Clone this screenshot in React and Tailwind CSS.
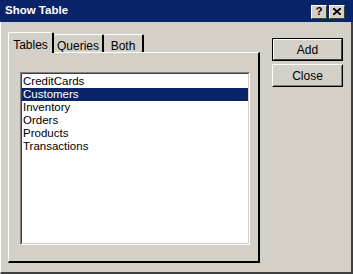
import React from 'react';

const tables = ['CreditCards', 'Customers', 'Inventory', 'Orders', 'Products', 'Transactions'];

function TitleButton({ children }) {
  return (
    <div className="w-[16px] h-[14px] bg-[#d4d0c8] border border-t-white border-l-white border-r-[#404040] border-b-[#404040] flex items-center justify-center text-[11px] font-bold leading-none text-black">
      {children}
    </div>
  );
}

function Tab({ label, active, width }) {
  if (active) {
    return (
      <div
        className={`${width} h-[21px] -mb-px relative z-10 bg-[#d4d0c8] border-t border-l border-r-2 border-t-white border-l-white border-r-black rounded-t-[2px] flex items-start justify-center pt-[3px] text-[12px]`}
      >
        {label}
      </div>
    );
  }
  return (
    <div
      className={`${width} h-[18px] bg-[#d4d0c8] border-t border-r-2 border-t-white border-r-black rounded-t-[2px] flex items-start justify-center pt-[2px] text-[12px]`}
    >
      {label}
    </div>
  );
}

function PushButton({ label, isDefault }) {
  if (isDefault) {
    return (
      <div className="w-[71px] h-[23px] border border-black">
        <div className="w-full h-full border border-t-white border-l-white border-r-[#404040] border-b-[#404040] flex items-center justify-center text-[12px]">
          {label}
        </div>
      </div>
    );
  }
  return (
    <div className="w-[71px] h-[23px] border border-t-white border-l-white border-r-black border-b-black">
      <div className="w-full h-full border border-t-[#d4d0c8] border-l-[#d4d0c8] border-r-[#808080] border-b-[#808080] flex items-center justify-center text-[12px]">
        {label}
      </div>
    </div>
  );
}

export default function App() {
  return (
    <div
      className="w-[353px] h-[274px] bg-[#d4d0c8] flex flex-col text-black overflow-hidden"
      style={{ fontFamily: '"Liberation Sans", sans-serif' }}
    >
      <div className="h-[22px] bg-[#0a246a] flex items-center justify-between pl-[5px] pr-[8px] shrink-0">
        <span className="text-white font-bold text-[11.5px]">Show Table</span>
        <div className="flex gap-[2px] mt-[1px]">
          <TitleButton>?</TitleButton>
          <TitleButton>
            <svg width="8" height="7" viewBox="0 0 8 7">
              <path d="M0 0 L8 7 M8 0 L0 7" stroke="black" strokeWidth="1.8" />
            </svg>
          </TitleButton>
        </div>
      </div>

      <div className="flex-1 flex border-l border-r-2 border-b-2 border-l-white border-r-[#404040] border-b-[#404040]">
        <div className="ml-[7px] mt-[10px] w-[252px] flex flex-col">
          <div className="flex items-end h-[20px]">
            <Tab label="Tables" active width="w-[46px]" />
            <Tab label="Queries" width="w-[50px]" />
            <Tab label="Both" width="w-[40px]" />
          </div>
          <div className="h-[211px] border-t border-l border-r-2 border-b-2 border-t-white border-l-white border-r-black border-b-black pl-[11px] pt-[19px]">
            <div className="w-[230px] h-[173px] border border-t-[#808080] border-l-[#808080] border-r-white border-b-white">
              <div className="w-full h-full bg-white border border-t-[#404040] border-l-[#404040] border-r-[#d4d0c8] border-b-[#d4d0c8] pt-[1px]">
                {tables.map((t) => (
                  <div
                    key={t}
                    className={`h-[13px] leading-[13px] pl-[1px] text-[11.5px] ${t === 'Customers' ? 'bg-[#0a246a] text-white' : ''}`}
                  >
                    {t}
                  </div>
                ))}
              </div>
            </div>
          </div>
        </div>

        <div className="ml-[12px] mt-[16px] flex flex-col gap-[3px]">
          <PushButton label="Add" isDefault />
          <PushButton label="Close" />
        </div>
      </div>
    </div>
  );
}
